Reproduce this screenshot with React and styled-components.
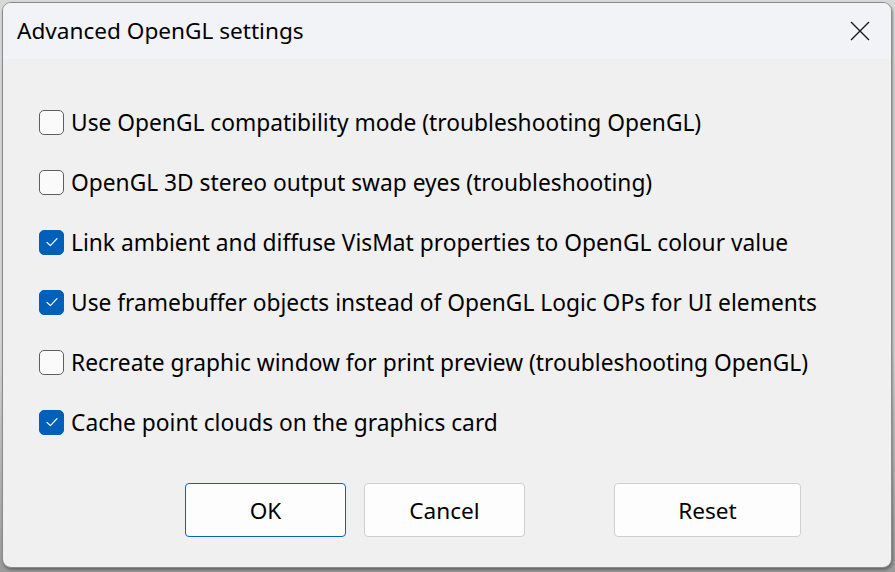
import React from 'react'
import styled, { createGlobalStyle } from 'styled-components'

const GlobalStyle = createGlobalStyle`
  html, body {
    margin: 0;
    padding: 0;
    background: #9c9c9c;
  }
  * {
    box-sizing: border-box;
  }
`

const StyledPage = styled.div`
  width: 895px;
  height: 572px;
  padding: 2px 3px 4px 2px;
  background: linear-gradient(#d8d8d8 0, #d8d8d8 60%, #9a9a9a 100%);
  font-family: 'Noto Sans', 'Open Sans', sans-serif;
  color: #000;
`

const StyledDialog = styled.div`
  width: 100%;
  height: 100%;
  display: flex;
  flex-direction: column;
  background: #f0f0f0;
  border: 1px solid #8a8a8a;
  border-radius: 9px;
  overflow: hidden;
  box-shadow: 1px 2px 3px rgba(0, 0, 0, 0.35);
`

const StyledTitleBar = styled.div`
  height: 56px;
  flex: none;
  display: flex;
  align-items: center;
  justify-content: space-between;
  padding: 0 20px 0 14px;
  background: #f2f3f6;
`

const StyledTitle = styled.div`
  font-size: 22.6px;
  padding-bottom: 2px;
`

const StyledClose = styled.button`
  border: none;
  background: none;
  padding: 0;
  width: 22px;
  height: 22px;
  display: flex;
  align-items: center;
  justify-content: center;
  cursor: pointer;
`

const StyledBody = styled.div`
  flex: 1;
  display: flex;
  flex-direction: column;
  padding: 33px 36px 0;
`

const StyledOptionList = styled.div`
  display: flex;
  flex-direction: column;
`

const StyledOption = styled.label`
  height: 60px;
  display: flex;
  align-items: center;
  gap: 7px;
  font-size: 22.75px;
  white-space: nowrap;
`

const StyledBox = styled.span`
  width: 25px;
  height: 25px;
  flex: none;
  border-radius: 5px;
  display: flex;
  align-items: center;
  justify-content: center;
  background: ${({ checked }) => (checked ? '#005fb8' : '#fafafa')};
  border: ${({ checked }) => (checked ? '1px solid #005fb8' : '1.5px solid #5e5e5e')};
`

const StyledButtonRow = styled.div`
  display: flex;
  margin-top: 31px;
  padding-left: 146px;
`

const StyledButton = styled.button`
  width: ${({ wide }) => (wide ? '187px' : '161px')};
  height: 54px;
  margin-left: ${({ gap }) => gap}px;
  background: #fdfdfd;
  border: 1px solid ${({ primary }) => (primary ? '#0067c0' : '#cfcfcf')};
  border-radius: 4px;
  font-family: inherit;
  font-size: 22.6px;
  color: #000;
  padding: 0;
`

const options = [
  { label: 'Use OpenGL compatibility mode (troubleshooting OpenGL)', checked: false },
  { label: 'OpenGL 3D stereo output swap eyes (troubleshooting)', checked: false },
  { label: 'Link ambient and diffuse VisMat properties to OpenGL colour value', checked: true },
  { label: 'Use framebuffer objects instead of OpenGL Logic OPs for UI elements', checked: true },
  { label: 'Recreate graphic window for print preview (troubleshooting OpenGL)', checked: false },
  { label: 'Cache point clouds on the graphics card', checked: true }
]

const Checkbox = ({ checked }) => (<StyledBox checked={checked}>
  {checked && (<svg width='14' height='14' viewBox='0 0 14 14'>
    <path d='M2 7.4 L5.4 10.6 L12 3.6' fill='none' stroke='#fff' strokeWidth='1.3' strokeLinecap='round' strokeLinejoin='round' />
  </svg>)}
</StyledBox>)

const App = () => {
  return (<StyledPage>
    <GlobalStyle />
    <StyledDialog>
      <StyledTitleBar>
        <StyledTitle>Advanced OpenGL settings</StyledTitle>
        <StyledClose aria-label='Close'>
          <svg width='20' height='20' viewBox='0 0 20 20'>
            <path d='M1 1 L19 19 M19 1 L1 19' stroke='#1a1a1a' strokeWidth='1.4' />
          </svg>
        </StyledClose>
      </StyledTitleBar>
      <StyledBody>
        <StyledOptionList>
          {options.map((option) => (<StyledOption key={option.label}>
            <Checkbox checked={option.checked} />
            <span>{option.label}</span>
          </StyledOption>))}
        </StyledOptionList>
        <StyledButtonRow>
          <StyledButton primary gap={0}>OK</StyledButton>
          <StyledButton gap={18}>Cancel</StyledButton>
          <StyledButton wide gap={89}>Reset</StyledButton>
        </StyledButtonRow>
      </StyledBody>
    </StyledDialog>
  </StyledPage>)
}

export default App
